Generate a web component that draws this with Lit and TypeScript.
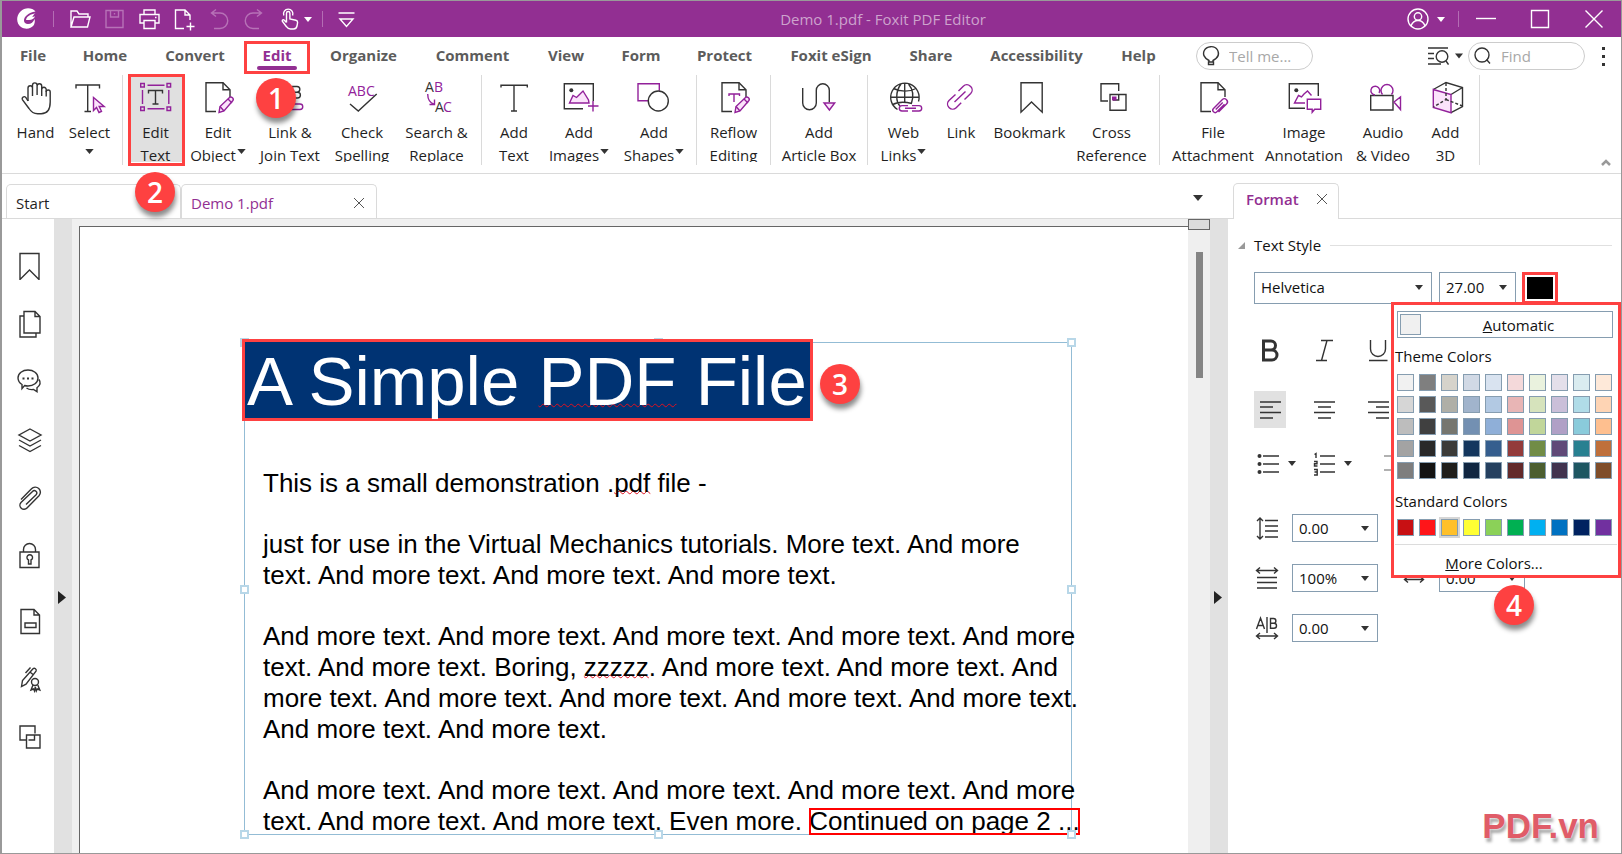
import { LitElement, html, svg, css, nothing, TemplateResult } from "lit";
import { customElement } from "lit/decorators.js";
import { classMap } from "lit/directives/class-map.js";
import { styleMap } from "lit/directives/style-map.js";

type Art = TemplateResult;

const caret = html`<svg class="caret" viewBox="0 0 10 6" aria-hidden="true"><path d="M0 0h10L5 6z" /></svg>`;
const cross = html`<svg class="x" viewBox="0 0 12 12" aria-hidden="true"><path d="M1 1l10 10M11 1L1 11" /></svg>`;

const sheet = svg`<path d="M18 31.5H8V2.7h17l7 7V17"/><path d="M25 2.7v7h7"/>`;
const pencil = svg`<path class="p f" d="M21 32.5l1-6L31.5 17.500c1-.8 2-.6 3 .3s1 2 .2 3L26 31z"/><path class="p" d="M22 26.500l4 4.500M30 19l4 4"/>`;
const mountains = svg`<path class="p f" d="M10.500 23L14 15.500l3.500 2L20 15l4-4 5.500 9 .5 3z"/>`;

const art: Record<string, Art> = {
  hand: svg`<path d="M12 21V8a2.2 2.2 0 0 1 4.500 0v8M16.500 15V5.200a2.300 2.300 0 0 1 4.600 0V15M21.100 6a2.300 2.300 0 0 1 4.600 0v10M25.700 9.500a2.200 2.200 0 0 1 4.500 0v7"/><path d="M30.200 12a2 2 0 0 1 4 0v10c0 7.500-3.200 11.700-9 11.700h-3.500c-4.400 0-6.700-2-8.700-5.200L6.400 19.600c-1-2 1.600-4 3.400-2.200L12 21"/>`,
  select: svg`<path d="M6 8.500V5h23.500v3.500M17.700 5v26.500M14.500 31.500h6.500"/><path class="p f" d="M23.500 17.500v13l3-3 2.500 5 2.500-1.200-2.300-4.800h5z"/>`,
  editText: svg`<path class="p" d="M4.700 3.500h3.600V7H4.700zM31 3.500h3.600V7H31zM4.700 27h3.600v3.500H4.700zM31 27h3.600v3.500H31zM11.500 5.200h17M11.500 28.700h17M6.500 10v14M32.800 10v14"/><path d="M12.500 13.500V10.500h14v3M19.500 10.500V24M16.500 24h6"/>`,
  editObject: svg`${sheet}${pencil}`,
  join: svg`<path d="M22.500 6.500h4.500a2.800 2.800 0 0 1 0 5.700h-4.500zM22.500 12.200h5a2.900 2.900 0 0 1 0 5.800h-5z"/><path class="p" d="M6 24h24a2.700 2.700 0 0 1 0 5.500H6"/>`,
  check: svg`<text class="pt" x="6" y="16">ABC</text><path d="M8 24l8.300 7L34.700 14"/>`,
  replace: svg`<text class="dt" x="8" y="12">A</text><text class="pt" x="17" y="12">B</text><text class="dt" x="18" y="32">A</text><text class="pt" x="26" y="32">C</text><path class="p" d="M10.700 14c0 6 2 8.500 6.600 10.500M17.500 19.500v5h-5"/>`,
  addText: svg`<path d="M7 7.500V5.300h26.300v2.200M20 5.300V31M17 31h6"/>`,
  addImage: svg`<path d="M24 28.700H5.300v-25h29V21"/><circle class="s" cx="12.300" cy="10.300" r="2"/>${mountains}<path class="p" d="M34 21v10.500M29 26h10.500"/>`,
  addShape: svg`<path class="p" d="M15 20.700H4v-17h21.300v7"/><circle cx="24.300" cy="21" r="10"/>`,
  reflow: svg`${sheet}<path class="p" d="M15 16v-2h10.500v2M20 14v8"/>${pencil}`,
  article: svg`<path d="M3.700 8v15a6.800 6.800 0 0 0 13.600 0V10.300a6.500 6.500 0 0 1 13 0v12"/><path class="p f" d="M25 23h10.700l-5.300 7z"/>`,
  web: svg`<path d="M13.500 29.500A14.200 14.200 0 1 1 34.500 21.500M6.500 17.300h28.300M9.500 8.500c7 3.500 16 3.500 22.500 0M8 25c4-2.500 12-3.500 20-1.500M20.700 3v19M17 4c-6 8-5 18-1 22M24.500 4c5 6 5 13 3 19"/><path class="p" d="M24 31h-6a2.700 2.700 0 0 1 0-5.400h6M28 25.600h7a2.700 2.700 0 0 1 0 5.400h-7M21 28.300h11"/>`,
  link: svg`<path class="p" d="M17.500 11l4.800-4.800a5 5 0 0 1 7 0l.4.400a5 5 0 0 1 0 7L23.500 19.500M14.500 14.500L8 20.500a5 5 0 0 0 0 7l.2.200a5 5 0 0 0 7 0l5-5M13.500 22l11-10.500"/>`,
  bookmark: svg`<path d="M11 2.700h21.200v29.500L21.500 22 11 32.200z"/>`,
  crossRef: svg`<path d="M16 21H9V3.700h17.700V11M18 14.500h16v15.700H18zM26.700 14.500V20H21"/><path class="ps" d="M20 16.500h4.500v4H20z"/>`,
  fileAtt: svg`${sheet}<path class="p" d="M25.500 32l8-8a3 3 0 0 0-4.300-4.300l-8.700 8.700a2.300 2.300 0 0 0 3.400 3.400l7.600-7.600M22.700 29.500l7-7"/>`,
  imageAnn: svg`<path d="M21 28.300H5.300V3.700h29V16"/><circle class="s" cx="12.300" cy="10.300" r="2"/><path class="p" d="M21 23H10.500l4-7.500 3 1.500 2.500-3 3.500-3 4 4.500"/><path class="p" d="M23.300 19.300h13.400v10h-6l-2.500 3v-3h-4.900z"/>`,
  video: svg`<path d="M7.700 15.500H30V30H7.700z"/><path class="p" d="M12 15a4.400 4.400 0 1 1 4-2M19.500 14.500a6 6 0 1 1 9 0M31 22l6.500-5v12.500z"/>`,
  cube: svg`<path d="M7.300 9.500L20 2.500l16.500 5v19L25 32.700M25 14.500l11.500-7"/><path class="p f" d="M7.300 9.500L25 14.500v18.200L7.300 27.500z"/><path stroke-dasharray="3 2" d="M20 3v16.500L7.500 27M20 19.500l16.500 6.500"/>`,
};

interface Tool { id: string; icon: string; lines: string[]; w: number; menu?: boolean; }
const t = (icon: string, w: number, a: string, b = "", menu = false): Tool => ({ id: icon, icon, lines: [a, b], w, menu });

const groups: Tool[][] = [
  [t("hand", 53, "Hand"), t("select", 55, "Select", "", true)],
  [t("editText", 53, "Edit", "Text"), t("editObject", 72, "Edit", "Object", true), t("join", 72, "Link &", "Join Text"), t("check", 72, "Check", "Spelling"), t("replace", 77, "Search &", "Replace")],
  [t("addText", 52, "Add", "Text"), t("addImage", 78, "Add", "Images", true), t("addShape", 72, "Add", "Shapes", true)],
  [t("reflow", 61, "Reflow", "Editing")],
  [t("article", 84, "Add", "Article Box")],
  [t("web", 59, "Web", "Links", true), t("link", 56, "Link"), t("bookmark", 81, "Bookmark"), t("crossRef", 83, "Cross", "Reference")],
  [t("fileAtt", 94, "File", "Attachment"), t("imageAnn", 88, "Image", "Annotation"), t("video", 70, "Audio", "& Video"), t("cube", 55, "Add", "3D")],
];

const tabs: [string, number][] = [
  ["File", 24], ["Home", 46], ["Convert", 60], ["Edit", 30], ["Organize", 69], ["Comment", 75], ["View", 38],
  ["Form", 38], ["Protect", 55], ["Foxit eSign", 84], ["Share", 42], ["Accessibility", 95], ["Help", 35],
];

const quick: { name: string; art: Art; dim?: boolean; wide?: boolean }[] = [
  { name: "Open", art: svg`<path d="M3 19V3h6l2 3h9v3M3 19L6 9h16l-2.500 10z"/>` },
  { name: "Save", dim: true, art: svg`<path d="M3 2.500h17v17H3zM7.500 2.500v6.500h8V2.500M11.500 5v1.500"/>` },
  { name: "Print", art: svg`<path d="M6 6V2h11v4M6 15H2V6.500h19V15h-4M6 12.500h11v8H6zM17 9.500h1.500"/>` },
  { name: "New", art: svg`<path d="M11 20.500H2.500V2H12l5 5v5M12 2v5h5M17.500 14.500v8M13.500 18.500h8"/>` },
  { name: "Undo", dim: true, art: svg`<path d="M8 1.500L3.500 5 8 8.500M3.500 5H12a7.700 7.700 0 0 1 0 15.500H6"/>` },
  { name: "Redo", dim: true, art: svg`<path d="M14 1.500L18.500 5 14 8.500M18.500 5H10a7.700 7.700 0 0 0 0 15.500h6"/>` },
  { name: "Touch", wide: true, art: svg`<path d="M7.500 14.500V5.200a1.700 1.700 0 0 1 3.400 0V11l6 1.200c1.300.3 1.800 1 1.700 2.300l-.6 3.500c-.4 2-1.500 3-3.500 3h-3c-2 0-3-.8-4-2.300L3.300 13.300c-.3-1.300 1-2 2-1.100L7.500 14.500M4.800 7.500a4.700 4.700 0 1 1 8.800 0"/>` },
];

const side: { name: string; art: Art }[] = [
  { name: "Bookmarks", art: svg`<path d="M4 1.500h19v26L13.500 18 4 27.500z"/>` },
  { name: "Pages", art: svg`<path d="M8 1.500h11l5 5V23H8zM19 1.500v5h5M8 6H4v21h16v-4"/>` },
  { name: "Comments", art: svg`<path d="M6 20.500v-4A8.500 8 0 0 1 2 10c0-4.500 4.500-8 10-8s10 3.500 10 8-4.500 8-10 8c-1.300 0-2.300 0-3.400-.5zM23 11.500c2 3 1 6-2 8.200v4L17.500 21.500c-2.500.4-5 0-7-1.500"/><path class="s" d="M6.500 9.500h2v2h-2zM11 9.500h2v2h-2zM15.500 9.500h2v2h-2z"/>` },
  { name: "Layers", art: svg`<path d="M14 3l11 6-11 6L3 9zM3 14l11 6 11-6M3 19.500l11 6 11-6"/>` },
  { name: "Attachments", art: svg`<path d="M5 15.500L15.500 4.800a5 5 0 0 1 7.500 7L11 24a4 4 0 0 1-6-5.500L16.500 7.500a2.400 2.400 0 0 1 3.600 3.300L10 20.500"/>` },
  { name: "Security", art: svg`<path d="M4 10h19v15.500H4zM7.500 10V7.500a6 6 0 0 1 12 0V10M12.500 18a2.800 2.800 0 1 1 2.500 0v4h-2.500z"/>` },
  { name: "Fields", art: svg`<path d="M5 2.500h13l5.500 5.500v18.500H5zM18 2.500V8h5.500M9 16h11v4.500H9z"/>` },
  { name: "Signatures", art: svg`<path d="M5.500 21.500l1-6L17 3.800c1.500-1.500 4 .5 3 2.300l-10 13zM9.500 8l5-5.500M14 7l3 2.500"/><circle cx="19" cy="17" r="3.500"/><path d="M17 20l-2 5 2.500-1 1 2 .8-4 1 4 1-2 2.500 1-2-5"/>` },
  { name: "Cross references", art: svg`<path d="M10.500 17H4V3h15v7.500M10.500 12H24v13H10.500zM18.500 12v5h-6"/>` },
];

const theme = [
  ["#f1f1f1", "#7f7f7f", "#d6d3cb", "#d1d9e5", "#d9e3f0", "#f4d9da", "#eaf2de", "#e4dfea", "#daecf0", "#fee9d9"],
  ["#d6d6d6", "#595959", "#afafa7", "#a1b4cc", "#b2c9e3", "#e8b5b5", "#d6e3bc", "#cabfd9", "#b0dce8", "#fed4b4"],
  ["#bdbdbd", "#404040", "#76766f", "#7390b2", "#8fafd8", "#de9494", "#c1d69a", "#b0a0c6", "#8acbdb", "#febf8f"],
  ["#a3a3a3", "#292929", "#3b3b39", "#14375e", "#355e8e", "#933b3b", "#718c46", "#604a78", "#288091", "#bf703b"],
  ["#7e7e7e", "#141414", "#1e1e1c", "#102641", "#25405f", "#632a2b", "#4b5e30", "#41334f", "#1e5662", "#7f4d2a"],
];
const standard = ["#c81013", "#ff1519", "#ffc02a", "#ffff33", "#8bd158", "#00b052", "#00b0f1", "#0071c1", "#002260", "#71309f"];

const panelIcon = {
  bold: svg`<path class="b" d="M6.500 4h7.500a4.500 4.500 0 0 1 0 9H6.500zM6.500 13h8.500a5 5 0 0 1 0 10H6.500z"/>`,
  italic: svg`<path d="M10 3.500h12M5 23.500h11M16 3.500l-5.500 20"/>`,
  underline: svg`<path d="M5.500 3v9a7.500 7.500 0 0 0 15 0V3M4 23.500h18.500"/>`,
  left: svg`<path d="M3 5h21M3 10h13M3 15.500h21M3 21h13"/>`,
  center: svg`<path d="M3 5h21M7 10h13M3 15.500h21M7 21h13"/>`,
  right: svg`<path d="M3 5h21M11 10h13M3 15.500h21M11 21h13"/>`,
  bullets: svg`<path d="M8 5h16M8 13h16M8 21h16"/><circle class="s" cx="4.500" cy="5" r="2"/><circle class="s" cx="4.500" cy="13" r="2"/><circle class="s" cx="4.500" cy="21" r="2"/>`,
  numbers: svg`<path d="M9 5h15M9 13h15M9 21h15M3.500 3.500l1.500-1V7M3 10.500h3v2.300H3.500V15H6.500M3 18.500h3.200v5.500H3M3.500 21h2.500"/>`,
  spacing: svg`<path d="M6 3.500v20M3 6l3-3 3 3M3 21l3 3 3-3M11 5.500h13M11 11h13M11 16h13M11 22h13"/>`,
  scale: svg`<path d="M3 5.500h20M6 2.500l-3.500 3L6 8.500M20 2.500l3.500 3-3.500 3M3 12.500h20M3 17.500h20M3 23h20"/>`,
  gap: svg`<path d="M2.500 14l4-11 4 11M4 10.500h5M13 2v16M16.500 3.500h3a2.300 2.300 0 0 1 0 4.800h-3zM16.500 8.300H20a2.500 2.500 0 0 1 0 5h-3.500zM3 21h20M6 18l-3.500 3L6 24M20 18l3.500 3-3.500 3"/>`,
  word: svg`<path d="M4 14.500h18M7 11.500l-3.500 3 3.500 3M19 11.500l3.500 3-3.500 3"/>`,
  indent: svg`<path d="M3 5h21M3 19h21"/>`,
};

@customElement("app-root")
export class AppRoot extends LitElement {
  static styles = css`
    :host {
      display: flex;
      flex-direction: column;
      box-sizing: border-box;
      height: 100vh;
      border: 1px solid #999;
      border-left-width: 2px;
      background: #fff;
      color: #1f1f1f;
      font: 15px/20px "Open Sans", "Noto Sans", sans-serif;
      overflow: hidden;
    }
    *, *::before, *::after { box-sizing: border-box; }
    button { padding: 0; border: 0; background: none; color: inherit; font: inherit; }
    svg { display: block; flex: none; fill: none; stroke: #333; stroke-width: 1.4; }
    svg .p { stroke: #92219a; }
    svg .f { fill: #fbe3fb; }
    svg .s { fill: #333; stroke: none; }
    svg .ps { fill: #92219a; stroke: none; }
    svg .b { stroke-width: 3; }
    svg text { font: 14px "Open Sans", sans-serif; stroke: none; fill: #333; }
    svg .pt { fill: #92219a; }
    .caret { width: 10px; height: 6px; fill: #333; stroke: none; }
    .x { width: 12px; height: 12px; stroke: #555; stroke-width: 1; }
    .callout {
      position: absolute; z-index: 5; display: grid; place-items: center;
      width: 40px; height: 40px; border-radius: 50%;
      background: #fe4141; color: #fff; font-size: 28px; line-height: 40px; font-weight: 600;
      box-shadow: 1px 5px 5px rgba(0, 0, 0, 0.45);
    }

    .title { display: flex; flex: none; align-items: center; height: 36px; background: #922f92; color: #fff; }
    .title svg { stroke: #fff; }
    .title .caret { fill: #fff; stroke: none; width: 8px; height: 5px; }
    .logo { margin-left: 14px; width: 22px; height: 22px; }
    .rule { flex: none; width: 1px; height: 16px; background: #b46db4; }
    .logo + .rule { margin: 0 8px 0 15px; }
    .quick { display: flex; align-items: center; justify-content: center; width: 35px; height: 36px; }
    .quick svg { width: 23px; height: 23px; }
    .quick .caret { width: 8px; height: 5px; margin-left: 2px; }
    .quick.dim svg { stroke: #b772b7; }
    .quick.wide { width: 50px; padding-right: 4px; }
    .quick.more { width: 46px; }
    .name { flex: 1; margin: 0; text-align: center; color: #cda3cd; font: inherit; white-space: nowrap; }
    .user { display: flex; align-items: center; justify-content: center; gap: 8px; width: 58px; height: 36px; }
    .user + .rule { margin-left: 3px; }
    .user svg:first-child { width: 22px; height: 22px; }
    .win { display: grid; place-items: center; width: 54px; height: 36px; }
    .win svg { width: 20px; height: 20px; }

    .bar { display: flex; flex: none; align-items: center; height: 38px; padding: 0 15px 0 19px; }
    .tabs { display: flex; gap: 37px; }
    .tab {
      position: relative; display: flex; justify-content: center; height: 38px;
      color: #5c5c5c; font-weight: 700; line-height: 36px; text-decoration: none; white-space: nowrap;
    }
    .tab.on { color: #922f92; }
    .tab.on::before { content: ""; position: absolute; bottom: 5px; left: -5px; right: -5px; height: 4px; border-radius: 2px; background: #922f92; }
    .tab.on::after { content: ""; position: absolute; z-index: 2; top: 4px; bottom: 1px; left: -18px; right: -18px; border: 3px solid #fe4141; }
    .tab .callout { top: 41px; left: -6px; }
    .search { display: flex; align-items: center; gap: 8px; width: 117px; height: 28px; padding-left: 4px; border: 1px solid #ccc; border-radius: 14px; }
    .search svg { width: 20px; height: 22px; }
    .search input { flex: 1; min-width: 0; padding: 0; border: 0; outline: 0; background: none; font: inherit; }
    .search input::placeholder { color: #a8a8a8; opacity: 1; }
    .tabs + .search { margin-left: 40px; }
    .adv { display: flex; align-items: center; gap: 6px; margin: 0 5px 0 auto; }
    .adv svg:first-child { width: 22px; height: 20px; }
    .adv .caret { width: 8px; }
    .dots { display: grid; gap: 5px; width: 4px; margin-left: 17px; }
    .dots i { width: 3px; height: 3px; background: #333; }

    .ribbon { position: relative; display: flex; flex: none; align-items: flex-start; height: 99px; padding-left: 1px; border-bottom: 1px solid #dadada; }
    .group { display: flex; height: 90px; padding: 0 6px; border-right: 1px solid #dadada; }
    .group:first-child { padding-right: 5px; }
    .tool { position: relative; display: flex; flex: none; align-items: flex-start; height: 90px; }
    .face { display: flex; flex: 1; flex-direction: column; align-items: center; height: 87px; padding-top: 5px; }
    .face.cut { overflow: hidden; }
    .tool .art { width: 40px; height: 36px; margin-bottom: 5px; }
    .lab { flex: none; height: 23px; line-height: 23px; white-space: nowrap; }
    .lab.drop { position: relative; padding-right: 10px; }
    .lab .caret { position: absolute; top: 5px; right: 0; width: 9px; height: 5px; }
    .lab.bare { width: 9px; padding: 0; }
    .tool.on .face { background: #e0e0e0; }
    .tool.on::after { content: ""; position: absolute; top: -1px; bottom: -1px; left: -1px; right: -3px; border: 3px solid #fe4141; }
    .tool .callout { top: 97px; left: 6px; }
    .fold { align-self: flex-end; margin: 0 10px 7px auto; }
    .fold svg { width: 10px; height: 7px; stroke: #999; stroke-width: 2.5; }

    .work { display: flex; flex: 1; min-height: 0; }
    .left { display: flex; flex: 1; flex-direction: column; min-width: 0; }
    .files { display: flex; flex: none; align-items: flex-end; height: 45px; padding-left: 4px; border-bottom: 1px solid #dadada; }
    .file { display: flex; align-items: center; justify-content: space-between; width: 175px; height: 34px; padding: 3px 11px 0 9px; border: 1px solid #dadada; border-bottom: 0; border-radius: 5px 5px 0 0; }
    .file.on { width: 196px; color: #922f92; }
    .files .all { margin: 0 25px 17px auto; }
    .desk { display: flex; flex: 1; min-height: 0; }
    .side { display: flex; flex: none; flex-direction: column; width: 52px; padding: 18px 0 0 3px; }
    .side button { display: grid; flex: none; place-items: center; height: 58px; }
    .side button:nth-child(7) { margin-top: 7px; }
    .side svg { width: 28px; height: 28px; }
    .grip { display: grid; flex: none; place-items: center start; width: 18px; padding: 122px 0 0 4px; background: #e1e1e1; }
    .grip svg { width: 8px; height: 13px; fill: #222; stroke: none; }
    .canvas { display: flex; flex: 1; min-width: 0; padding: 7px 0 0 7px; background: #f0f0f0; }
    .page { flex: 1; min-width: 0; padding: 115px 0 0 164px; border: solid #666; border-width: 1px 0 0 1px; background: #fff; overflow: hidden; }
    .frame { position: relative; width: 828px; border: 1px solid #93bcd5; color: #000; font: 26px/31px "Liberation Sans", Arial, sans-serif; }
    .handle { position: absolute; width: 9px; height: 9px; border: 2px solid #b8d7e8; background: #fff; }
    .n { top: -5px; } .m { top: 50%; margin-top: -4px; } .s { bottom: -5px; }
    .w { left: -5px; } .c { left: 50%; margin-left: -4px; } .e { right: -5px; }
    .frame h1 { position: relative; width: fit-content; height: 82px; margin: -4px 0 47px -3px; padding: 0 3px 0 2px; border: 3px solid #fe4141; background: #003373; color: #fff; font: 69px/80px "Liberation Sans", Arial, sans-serif; white-space: nowrap; }
    .frame h1 .callout { top: 22px; left: 575px; font: 600 28px/40px "Open Sans", sans-serif; }
    .frame p { margin: 0 0 30px 18px; white-space: nowrap; }
    .frame p:last-of-type { margin-bottom: -3px; }
    .bad { text-decoration: underline wavy #e01020 1px; text-underline-offset: -2px; text-decoration-skip-ink: none; }
    .cont { outline: 2px solid #f00; outline-offset: -2px; display: inline-block; height: 27px; line-height: 27px; }
    .scroll { flex: none; width: 22px; margin-top: -7px; background: #efefef; }
    .split { height: 11px; border: 1px solid #666; background: #dcdcdc; }
    .thumb { width: 7px; height: 126px; margin: 22px 0 0 8px; background: #848484; }

    .panel { display: flex; flex: none; flex-direction: column; width: 393px; }
    .ptabs { display: flex; flex: none; align-items: flex-end; height: 45px; padding-left: 5px; border-bottom: 1px solid #dadada; }
    .ptab { display: flex; align-items: center; justify-content: space-between; width: 106px; height: 36px; margin-bottom: -1px; padding: 0 10px 6px 12px; border: 1px solid #dadada; border-bottom: 0; border-radius: 5px 5px 0 0; background: #fff; color: #922f92; font-weight: 600; }
    .head { display: flex; align-items: center; gap: 9px; height: 52px; margin: 0; font: inherit; color: #111; }
    .head svg { width: 7px; height: 7px; margin-left: 10px; fill: #999; stroke: none; }
    .head::after { content: ""; flex: 1; height: 1px; margin: 0 9px 0 0; background: #e0e0e0; }
    .body { padding: 1px 0 0 26px; }
    .row { position: relative; display: flex; align-items: center; }
    .fontrow { gap: 7px; height: 31px; margin-bottom: 28px; }
    .combo { position: relative; display: flex; align-items: center; height: 28px; }
    .combo select { appearance: none; width: 100%; height: 100%; margin: 0; padding: 0 22px 2px 6px; border: 1px solid #869db0; border-radius: 0; background: #fff; color: #111; font: inherit; outline: 0; }
    .combo .caret { position: absolute; right: 9px; width: 8px; height: 5px; pointer-events: none; }
    .combo.family { width: 178px; height: 32px; }
    .combo.size { width: 77px; height: 32px; }
    .combo.num { width: 86px; }
    .combo.num select { padding-bottom: 0; }
    .ink { width: 36px; height: 32px; margin-left: -1px; border: 3px solid #fe4141; background: #000; box-shadow: inset 0 0 0 2px #fff; }
    .styles { gap: 22px; margin-bottom: 23px; }
    .aligns { gap: 22px; margin-bottom: 17px; }
    .lists { gap: 12px; margin-bottom: 32px; }
    .lists .faint { margin-left: 12px; opacity: 0.5; }
    .fmt { display: flex; align-items: center; justify-content: center; gap: 7px; width: 32px; height: 37px; }
    .fmt.on { background: #e1e1e1; }
    .fmt svg, .metric svg { width: 26px; height: 26px; }
    .fmt.drop { justify-content: flex-start; width: 44px; padding-left: 1px; }
    .fmt .caret { width: 8px; height: 5px; }
    .metrics { display: grid; grid-template-columns: 124px 124px; gap: 22px 23px; }
    .metric { display: flex; align-items: center; justify-content: space-between; }
    .metric .combo .caret { width: 8px; height: 5px; }

    .pop { position: absolute; z-index: 3; top: 30px; left: 137px; width: 230px; height: 276px; padding: 6px 3px 0; border: 3px solid #fe4141; background: #fff; color: #111; }
    .auto { display: flex; align-items: center; width: 216px; height: 27px; padding: 0 2px; border: 1px solid #869db0; }
    .auto i { flex: none; width: 21px; height: 21px; border: 1px solid #869db0; background: #f0f0f0; }
    .auto span { flex: 1; padding-left: 6px; text-align: center; }
    .pop h3 { margin: 0 -2px; font: inherit; line-height: 36px; }
    .pop h3.std { padding-top: 4px; }
    .swatches { display: grid; grid-template-columns: repeat(10, 17px); gap: 5px; }
    .sw { width: 17px; height: 17px; border: 1px solid #869db0; }
    .sw.on { box-shadow: 0 0 0 2px #d6d6d6; }
    .more-colors { display: block; width: 222px; height: 36px; margin: 8px -2px 0; padding: 0 24px 0 0; border-top: 1px solid #dcdcdc; }
    .pop .callout { top: 280px; left: 100px; }
    .mark { position: absolute; right: 23px; bottom: 10px; color: #e05c68; font: 700 35px/36px "Liberation Sans", Arial, sans-serif; text-shadow: 0 0 2px #fff, 2px 4px 3px #aaa; }
  `;

  private title_() {
    return html`<header class="title">
      <svg class="logo" viewBox="0 0 22 22" aria-hidden="true"><path fill="#fff" stroke="none" d="M19.500 3.500C16-.5 9-1 4.500 3.500-.5 8.500.5 16 5 19c4 2.800 10 2 12.500-1.500 1.500-2.300 1.500-4.500 1-6.500-1 3-3.500 5-6.500 5-2.500 0-4-1.500-4-3.500 0-4 4.500-8 11.500-9z"/><path fill="#fff" stroke="none" d="M10 12c.5-3.500 4.500-6 9.500-6.500-2.500 1-2 2.500-3.500 3.500 1 0 2-.3 3-.7-1 2.500-3 3.700-6 3.700z"/></svg>
      <span class="rule"></span>
      ${quick.map(q => html`<button class=${classMap({ quick: true, dim: !!q.dim, wide: !!q.wide })} aria-label=${q.name}><svg viewBox="0 0 23 23">${q.art}</svg>${q.wide ? caret : nothing}</button>`)}
      <span class="rule"></span>
      <button class="quick more" aria-label="Customize toolbar"><svg viewBox="0 0 23 23"><path d="M3.500 5h16M5 11l6.500 7.500L18 11z"/></svg></button>
      <h1 class="name">Demo 1.pdf - Foxit PDF Editor</h1>
      <button class="user" aria-label="Account"><svg viewBox="0 0 22 22"><circle cx="11" cy="11" r="10"/><circle cx="11" cy="8.500" r="3.700"/><path d="M4 18c1.500-4 4-5.500 7-5.500s5.500 1.500 7 5.500"/></svg>${caret}</button>
      <span class="rule"></span>
      <button class="win" aria-label="Minimize"><svg viewBox="0 0 20 20"><path d="M0 9.500h20"/></svg></button>
      <button class="win" aria-label="Maximize"><svg viewBox="0 0 20 20"><path d="M1.500 1.500h17v17h-17z"/></svg></button>
      <button class="win" aria-label="Close"><svg viewBox="0 0 20 20"><path d="M1.500 1.500l17 17M18.500 1.500l-17 17"/></svg></button>
    </header>`;
  }

  private menu_() {
    return html`<div class="bar">
      <nav class="tabs">${tabs.map(([n, w]) => html`<a href="#" class=${classMap({ tab: true, on: n === "Edit" })} style=${styleMap({ width: `${w}px` })}>${n}${n === "Edit" ? html`<span class="callout">1</span>` : nothing}</a>`)}</nav>
      <label class="search"><svg viewBox="0 0 20 22"><path d="M8 16.500v-1C3 13 1.500 9 3.300 5.500 5.500 1 13.500 0 16.500 5c2 4 .5 8-4.500 10.500v1M7.500 17h5v2.500h-5z"/></svg><input aria-label="Tell me" placeholder="Tell me..." /></label>
      <button class="adv" aria-label="Advanced search"><svg viewBox="0 0 22 20"><path d="M1 2h20M1 7.500h6M1 12.500h6M1 18h13"/><circle cx="15" cy="10.500" r="5.800"/><path d="M19 15l2.500 3.500"/></svg>${caret}</button>
      <label class="search"><svg viewBox="0 0 20 22"><circle cx="9" cy="10" r="7"/><path d="M13.500 14.500l3.500 4"/></svg><input aria-label="Find" placeholder="Find" /></label>
      <button class="dots" aria-label="More"><i></i><i></i><i></i></button>
    </div>`;
  }

  private tool_(b: Tool) {
    const [first, second] = b.lines;
    return html`<button class=${classMap({ tool: true, on: b.id === "editText" })} style=${styleMap({ width: `${b.w}px` })}>
      <span class=${classMap({ face: true, cut: /[gjp]/.test(second) })}><svg class="art" viewBox="0 0 40 36" aria-hidden="true">${art[b.icon]}</svg>
        <span class="lab">${first}</span>
        <span class=${classMap({ lab: true, drop: !!b.menu, bare: !!b.menu && !second })}>${second}${b.menu ? caret : nothing}</span></span>
      ${b.id === "editText" ? html`<span class="callout">2</span>` : nothing}
    </button>`;
  }

  private combo_(cls: string, label: string, value: string) {
    return html`<span class="combo ${cls}"><select aria-label=${label}><option>${value}</option></select>${caret}</span>`;
  }

  private metric_(icon: Art, label: string, value: string) {
    return html`<div class="metric"><svg viewBox="0 0 26 26" aria-hidden="true">${icon}</svg>${this.combo_("num", label, value)}</div>`;
  }

  private fmt_(icon: Art, label: string, cls = "") {
    return html`<button class="fmt ${cls}" aria-label=${label}><svg viewBox="0 0 26 26">${icon}</svg>${cls === "drop" ? caret : nothing}</button>`;
  }

  private swatches_(colors: string[]) {
    return html`<div class="swatches">${colors.map(c => html`<button class=${classMap({ sw: true, on: c === "#ffc02a" })} style=${styleMap({ background: c })} aria-label=${c}></button>`)}</div>`;
  }

  private doc_() {
    const a = "And more text.";
    return html`<div class="canvas"><article class="page"><div class="frame">
        ${["n w", "n c", "n e", "m w", "m e", "s w", "s c"].map(h => html`<i class="handle ${h}"></i>`)}
        <h1>A Simple <span class="bad">PDF</span> File<span class="callout">3</span></h1>
        <p>This is a small demonstration .<span class="bad">pdf</span> file -</p>
        <p>just for use in the Virtual Mechanics tutorials. More text. And more<br />text. ${a} ${a} ${a}</p>
        <p>${a} ${a} ${a} ${a} And more<br />text. ${a} Boring, <span class="bad">zzzzz</span>. ${a} ${a} And<br />more text. ${a} ${a} ${a} ${a}<br />${a} ${a}</p>
        <p>${a} ${a} ${a} ${a} And more<br />text. ${a} ${a} Even more. <span class="cont">Continued on page 2 ...</span></p>
        <i class="handle s e"></i>
      </div></article>
      <div class="scroll"><div class="split"></div><div class="thumb"></div></div>
    </div>`;
  }

  private panel_() {
    return html`<aside class="panel">
      <div class="ptabs"><div class="ptab">Format ${cross}</div></div>
      <h2 class="head"><svg viewBox="0 0 7 7"><path d="M7 0v7H0z"/></svg>Text Style</h2>
      <div class="body">
        <div class="row fontrow">
          ${this.combo_("family", "Font", "Helvetica")}${this.combo_("size", "Size", "27.00")}
          <button class="ink" aria-label="Text color"></button>
          <div class="pop">
            <button class="auto"><i></i><span><u>A</u>utomatic</span></button>
            <h3>Theme Colors</h3>${this.swatches_(theme.flat())}
            <h3 class="std">Standard Colors</h3>${this.swatches_(standard)}
            <button class="more-colors"><u>M</u>ore Colors...</button>
            <span class="callout">4</span>
          </div>
        </div>
        <div class="row styles">${this.fmt_(panelIcon.bold, "Bold")}${this.fmt_(panelIcon.italic, "Italic")}${this.fmt_(panelIcon.underline, "Underline")}</div>
        <div class="row aligns">${this.fmt_(panelIcon.left, "Align left", "on")}${this.fmt_(panelIcon.center, "Center")}${this.fmt_(panelIcon.right, "Align right")}</div>
        <div class="row lists">${this.fmt_(panelIcon.bullets, "Bullets", "drop")}${this.fmt_(panelIcon.numbers, "Numbering", "drop")}${this.fmt_(panelIcon.indent, "Indent", "faint")}</div>
        <div class="metrics">
          ${this.metric_(panelIcon.spacing, "Line spacing", "0.00")}<span></span>
          ${this.metric_(panelIcon.scale, "Horizontal scale", "100%")}${this.metric_(panelIcon.word, "Word spacing", "0.00")}
          ${this.metric_(panelIcon.gap, "Character spacing", "0.00")}
        </div>
      </div>
    </aside>`;
  }

  render() {
    const grip = html`<div class="grip"><svg viewBox="0 0 8 13" aria-hidden="true"><path d="M0 0l8 6.500L0 13z"/></svg></div>`;
    return html`${this.title_()}${this.menu_()}
      <div class="ribbon">${groups.map(g => html`<div class="group">${g.map(b => this.tool_(b))}</div>`)}
        <button class="fold" aria-label="Collapse ribbon"><svg viewBox="0 0 10 7"><path d="M1 6l4-4 4 4"/></svg></button></div>
      <main class="work">
        <section class="left">
          <div class="files"><div class="file">Start</div><div class="file on">Demo 1.pdf ${cross}</div><button class="all" aria-label="All tabs">${caret}</button></div>
          <div class="desk">
            <nav class="side">${side.map(s => html`<button aria-label=${s.name}><svg viewBox="0 0 28 28">${s.art}</svg></button>`)}</nav>
            ${grip}${this.doc_()}${grip}
          </div>
        </section>
        ${this.panel_()}
      </main>
      <div class="mark">PDF.vn</div>`;
  }
}
